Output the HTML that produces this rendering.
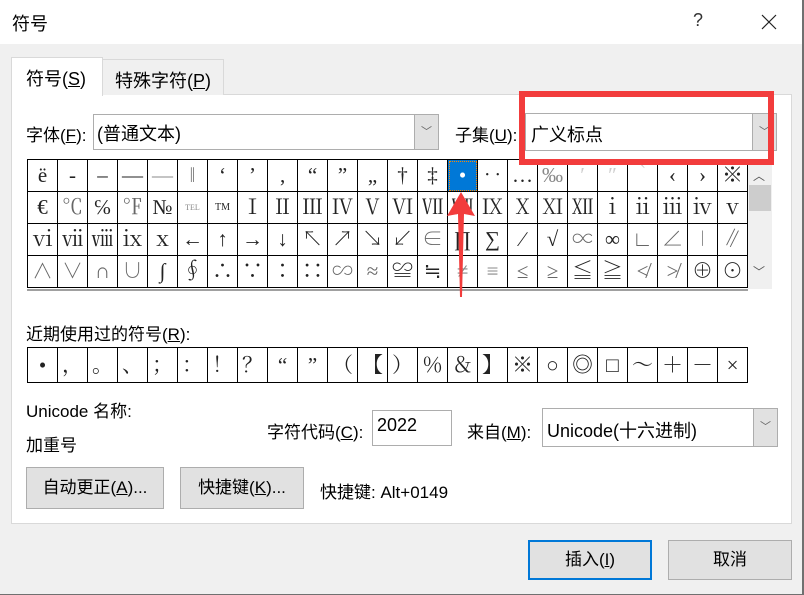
<!DOCTYPE html>
<html><head><meta charset="utf-8"><style>
*{box-sizing:border-box;margin:0;padding:0}
body{width:804px;height:595px;background:#f0f0f0;position:relative;overflow:hidden;font-family:"Liberation Sans","Noto Sans CJK SC",sans-serif;font-size:17px;color:#000}
.a{position:absolute}
.t{position:absolute;white-space:nowrap}
table{border-collapse:collapse;position:absolute;table-layout:fixed}
td{border:1px solid #000;width:30px;text-align:center;font-family:"Liberation Serif","Noto Serif CJK SC",serif;font-size:21px;color:#222;padding:0;overflow:hidden;line-height:1}
.g td{height:32px}
.r td{height:35px}
.combo{position:absolute;background:#fff;border:1px solid #adadad}
.arr{position:absolute;right:0;top:0;bottom:0;width:24px;background:#e1e1e1;border-left:1px solid #adadad;color:#666;font-size:11px;text-align:center}
.btn{position:absolute;background:#e1e1e1;border:1px solid #adadad;text-align:center;font-size:17px}
</style></head><body>
<div class="a" style="left:0;top:0;width:804px;height:44px;background:#fff"></div>
<div class="a" style="right:0;top:0;width:2px;height:595px;background:#707070"></div>
<div class="a" style="left:0;bottom:0;width:804px;height:1px;background:#707070"></div>
<div class="t" style="left:12px;top:10px;font-size:18px">符号</div>
<div class="t" style="left:693px;top:10px;font-size:18px;color:#333">?</div>
<svg class="a" style="left:761px;top:14px" width="16" height="16"><path d="M1 1L15 15M15 1L1 15" stroke="#222" stroke-width="1.2"/></svg>

<div class="a" style="left:11px;top:94px;width:781px;height:430px;background:#fff;border:1px solid #d9d9d9"></div>
<div class="a" style="left:102px;top:59px;width:122px;height:36px;background:#f0f0f0;border:1px solid #d9d9d9;border-bottom:none"></div>
<div class="a" style="left:11px;top:57px;width:92px;height:39px;background:#fff;border:1px solid #d9d9d9;border-bottom:none"></div>
<div class="t" style="left:26px;top:65px;font-size:18px">符号(<u>S</u>)</div>
<div class="t" style="left:115px;top:67px;font-size:18px">特殊字符(<u>P</u>)</div>

<div class="t" style="left:26px;top:121px">字体(<u>F</u>):</div>
<div class="combo" style="left:93px;top:114px;width:346px;height:36px"><span class="t" style="left:3px;top:5px;font-size:18px">(普通文本)</span><div class="arr" style="line-height:34px">﹀</div></div>
<div class="t" style="left:455px;top:121px">子集(<u>U</u>):</div>
<div class="combo" style="left:525px;top:113px;width:252px;height:38px"><span class="t" style="left:5px;top:7px;font-size:18px">广义标点</span><div class="arr" style="line-height:36px">﹀</div></div>

<table class="g" style="left:27px;top:159px">
<tr><td>ë</td><td>-</td><td>–</td><td>—</td><td style="color:#888">―</td><td style="color:#888">‖</td><td>‘</td><td>’</td><td>‚</td><td>“</td><td>”</td><td>„</td><td>†</td><td>‡</td><td style="background:#0078d7;color:#fff;outline:1px dotted #f80;outline-offset:-2px">•</td><td>‥</td><td>…</td><td style="color:#888">‰</td><td style="color:#ccc">′</td><td style="color:#ccc">″</td><td style="color:#ccc">‵</td><td>‹</td><td>›</td><td>※</td></tr>
<tr><td>€</td><td style="color:#666">℃</td><td>℅</td><td style="color:#666">℉</td><td>№</td><td style="font-size:8px;color:#888">TEL</td><td style="font-size:10px">TM</td><td>Ⅰ</td><td>Ⅱ</td><td>Ⅲ</td><td>Ⅳ</td><td>Ⅴ</td><td>Ⅵ</td><td>Ⅶ</td><td>Ⅷ</td><td>Ⅸ</td><td>Ⅹ</td><td>Ⅺ</td><td>Ⅻ</td><td>ⅰ</td><td>ⅱ</td><td>ⅲ</td><td>ⅳ</td><td>ⅴ</td></tr>
<tr><td>ⅵ</td><td>ⅶ</td><td>ⅷ</td><td>ⅸ</td><td>ⅹ</td><td>←</td><td>↑</td><td>→</td><td>↓</td><td>↖</td><td>↗</td><td>↘</td><td>↙</td><td style="color:#666">∈</td><td>∏</td><td>∑</td><td>∕</td><td>√</td><td style="color:#666">∝</td><td>∞</td><td style="color:#666">∟</td><td style="color:#666">∠</td><td style="color:#888">∣</td><td style="color:#666">∥</td></tr>
<tr><td style="color:#666">∧</td><td style="color:#666">∨</td><td style="color:#666">∩</td><td style="color:#666">∪</td><td>∫</td><td>∮</td><td>∴</td><td>∵</td><td>∶</td><td>∷</td><td style="color:#666">∽</td><td style="color:#666">≈</td><td>≌</td><td>≒</td><td style="color:#888">≠</td><td style="color:#888">≡</td><td style="color:#666">≤</td><td style="color:#666">≥</td><td>≦</td><td>≧</td><td style="color:#666">≮</td><td style="color:#666">≯</td><td>⊕</td><td>⊙</td></tr>
</table>
<div class="a" style="left:27px;top:289px;width:721px;height:2px;background:#a0a0a0"></div>
<div class="a" style="left:748px;top:159px;width:24px;height:130px;background:#f0f0f0"></div>
<div class="a" style="left:749px;top:185px;width:22px;height:26px;background:#cdcdcd"></div>
<div class="t" style="left:753px;top:167px;font-size:12px;color:#555">︿</div>
<div class="t" style="left:753px;top:263px;font-size:12px;color:#555">﹀</div>

<div class="t" style="left:26px;top:320px">近期使用过的符号(<u>R</u>):</div>
<table class="r" style="left:27px;top:347px;border:1px solid #888">
<tr><td>•</td><td>，</td><td>。</td><td>、</td><td>；</td><td>：</td><td>！</td><td>？</td><td>“</td><td>”</td><td>（</td><td>【</td><td>）</td><td>％</td><td>＆</td><td>】</td><td>※</td><td>○</td><td>◎</td><td>□</td><td>～</td><td>＋</td><td>－</td><td>×</td></tr>
</table>

<div class="t" style="left:26px;top:397px">Unicode 名称:</div>
<div class="t" style="left:26px;top:431px">加重号</div>
<div class="t" style="left:267px;top:418px">字符代码(<u>C</u>):</div>
<div class="a" style="left:372px;top:410px;width:80px;height:36px;background:#fff;border:1px solid #adadad"><span class="t" style="left:4px;top:4px;font-size:18px">2022</span></div>
<div class="t" style="left:467px;top:418px">来自(<u>M</u>):</div>
<div class="combo" style="left:542px;top:408px;width:236px;height:39px"><span class="t" style="left:4px;top:8px;font-size:18px">Unicode(十六进制)</span><div class="arr" style="line-height:37px">﹀</div></div>

<div class="btn" style="left:26px;top:467px;width:138px;height:42px;line-height:40px">自动更正(<u>A</u>)...</div>
<div class="btn" style="left:180px;top:467px;width:124px;height:42px;line-height:40px">快捷键(<u>K</u>)...</div>
<div class="t" style="left:320px;top:478px">快捷键: Alt+0149</div>

<div class="btn" style="left:528px;top:540px;width:124px;height:40px;line-height:36px;border:2px solid #0078d7">插入(<u>I</u>)</div>
<div class="btn" style="left:668px;top:540px;width:124px;height:40px;line-height:38px">取消</div>

<div class="a" style="left:519px;top:91px;width:255px;height:74px;border:6px solid #f23c3c"></div>
<svg class="a" style="left:0;top:0" width="804" height="595"><path d="M461 192L475 216L464 214L462 297L460 297L458 214L447 216Z" fill="#f23c3c"/></svg>
</body></html>
